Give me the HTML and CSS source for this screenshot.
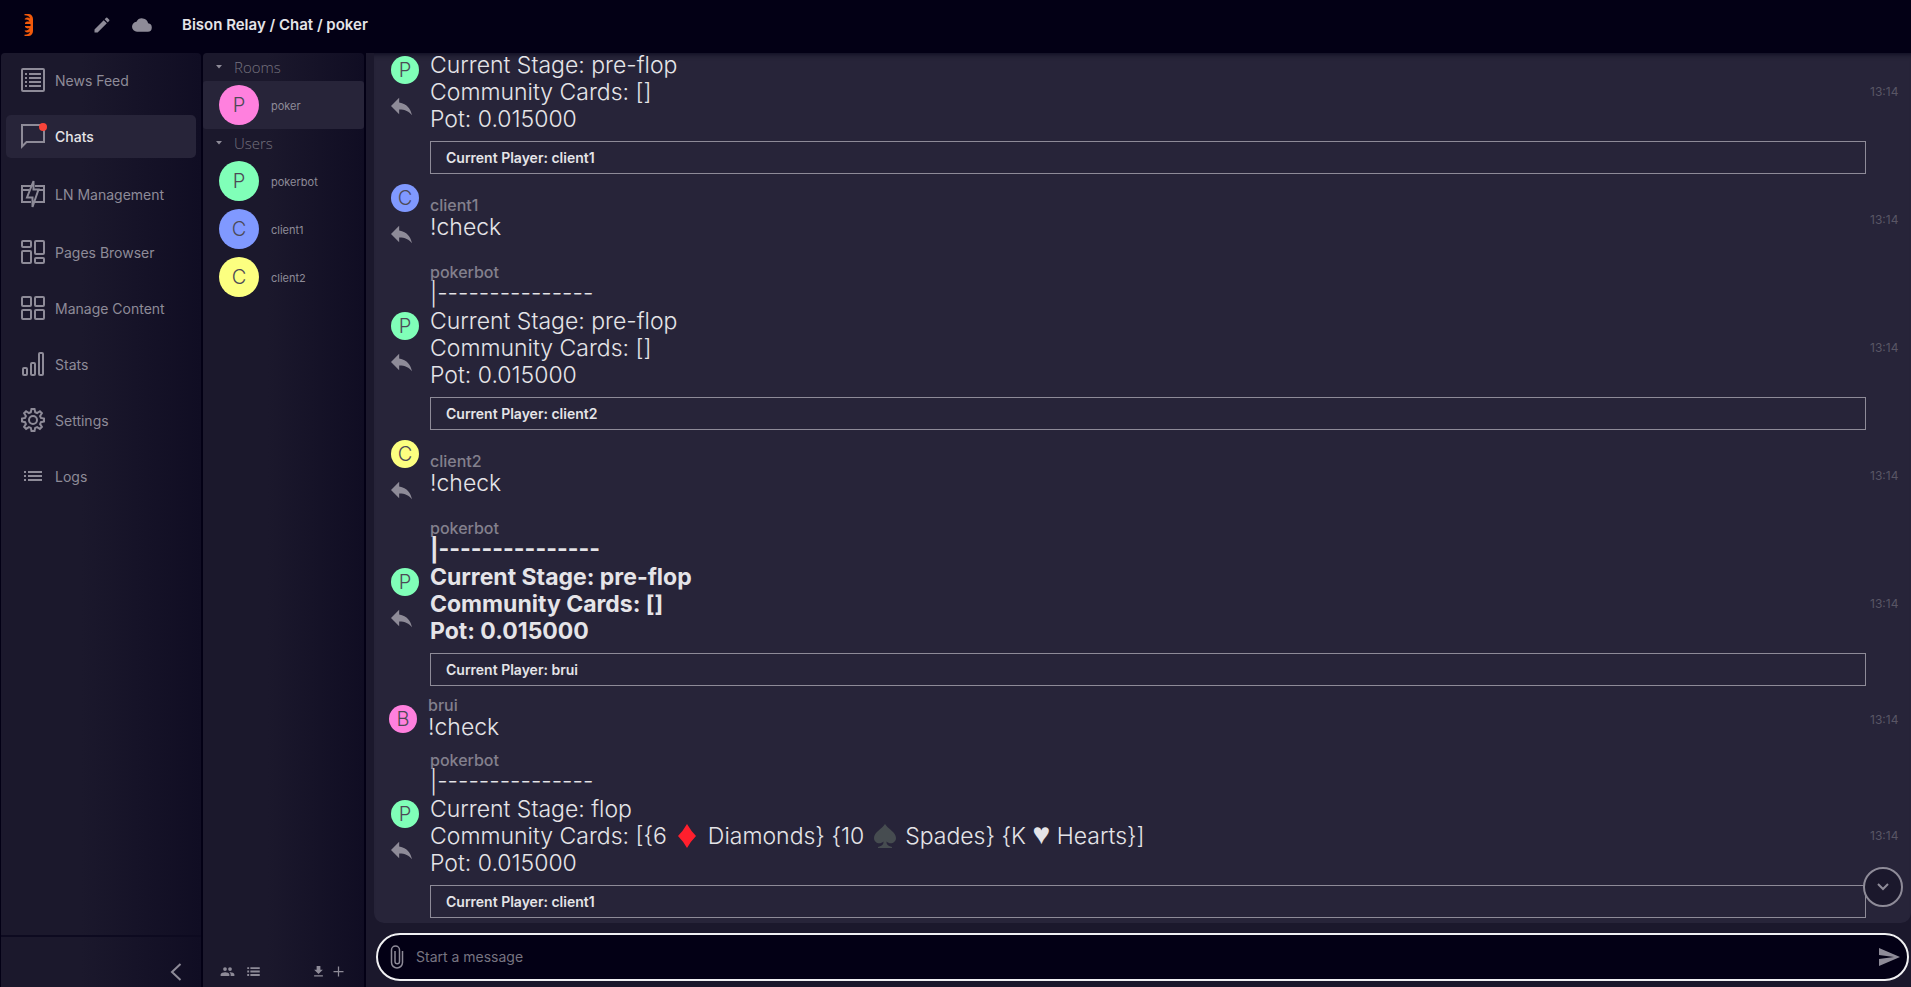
FILE: index.html
```html
<!DOCTYPE html>
<html lang="en">
<head>
<meta charset="utf-8">
<title>Bison Relay / Chat / poker</title>
<link rel="stylesheet" href="styles.css">
</head>
<body>
<svg class="defs" aria-hidden="true">
  <symbol id="reply" viewBox="3 0 24 24"><path d="M10 9V5l-7 7 7 7v-4.100c5 0 8.500 1.600 11 5.100-1-5-4-10-11-11z"/></symbol>
</svg>
<header class="topbar">
  <svg class="logo" viewBox="0 0 10 24" aria-label="Bison Relay"><path d="M.5 1H5c2.500.3 4 2.500 4 5v12c0 2.500-1.500 4.700-4 5H.5v-1.300c3 0 5-1 5.500-3.200C4.500 20 2.500 20 .8 18.200v-1c2 .6 4-.2 4.700-2.200-1.500.8-3.500.3-4.500-1v-1h5.500v-2H1v-1c1-1.300 3-1.800 4.500-1-.7-2-2.700-2.800-4.700-2.200v-1C2.500 4 4.500 4 6 5.500 5.500 3.300 3.500 2.300.5 2.300z"/></svg>
  <button class="icon-btn edit" aria-label="Edit"><svg viewBox="0 0 24 24"><path d="M3 17.250V21h3.750L17.810 9.940l-3.750-3.750zM20.710 7.040a1 1 0 0 0 0-1.410l-2.340-2.340a1 1 0 0 0-1.410 0l-1.830 1.830 3.750 3.750z"/></svg></button>
  <button class="icon-btn" aria-label="Connection"><svg viewBox="0 0 24 24"><path d="M19.350 10.040A7.490 7.490 0 0 0 5.350 8.040 6 6 0 0 0 6 20h13a5 5 0 0 0 .35-9.960z"/></svg></button>
  <h1 class="title">Bison Relay / Chat / poker</h1>
</header>
<div class="body">
  <nav class="sidebar">
    <div class="nav">
      <a class="nav-item" href="#feed"><span class="nav-pill"><svg viewBox="0 0 24 24"><rect x="1" y="1" width="22" height="22" rx="1"/><path d="M8 6h12M8 10h12M8 14h12M8 18h12M4 6h2M4 10h2M4 14h2M4 18h2"/></svg><span>News Feed</span></span></a>
      <a class="nav-item active" href="#chats"><span class="nav-pill"><svg viewBox="0 0 24 24"><path d="M1 1h22v17H5.500L1 22.500z"/></svg><i class="dot"></i><span>Chats</span></span></a>
      <a class="nav-item tall" href="#ln"><span class="nav-pill"><svg viewBox="0 0 24 24"><path d="M10 4H1v16h9M14 4h9v16h-9M1 8h7M16 8h7"/><path d="M12.500-1v8.500h5L11.500 25v-9.500H6z"/></svg><span>LN Management</span></span></a>
      <a class="nav-item" href="#pages"><span class="nav-pill"><svg viewBox="0 0 24 24"><rect x="1" y="1" width="9" height="6" rx="1"/><rect x="14" y="1" width="9" height="13" rx="1"/><rect x="1" y="11" width="9" height="12" rx="1"/><rect x="14" y="18" width="9" height="5" rx="1"/></svg><span>Pages Browser</span></span></a>
      <a class="nav-item" href="#content"><span class="nav-pill"><svg viewBox="0 0 24 24"><rect x="1" y="1" width="9" height="9" rx="1"/><rect x="14" y="1" width="9" height="9" rx="1"/><rect x="1" y="14" width="9" height="9" rx="1"/><rect x="14" y="14" width="9" height="9" rx="1"/></svg><span>Manage Content</span></span></a>
      <a class="nav-item" href="#stats"><span class="nav-pill"><svg viewBox="0 0 24 24"><rect x="2" y="16" width="4" height="7" rx="1"/><rect x="10" y="11" width="4" height="12" rx="1"/><rect x="18" y="1" width="4" height="22" rx="1"/></svg><span>Stats</span></span></a>
      <a class="nav-item" href="#settings"><span class="nav-pill"><svg viewBox="0 0 24 24"><circle cx="12" cy="12" r="4"/><path d="M10.500 1h3l.7 3.200 1.900.8 2.800-1.800 2 2-1.800 2.800.8 1.900 3.100.6v3l-3.100.7-.8 1.900 1.800 2.800-2 2-2.800-1.800-1.900.8-.7 3.100h-3l-.7-3.100-1.900-.8-2.800 1.800-2-2 1.800-2.800-.8-1.900L1 13.500v-3l3.100-.6.8-1.900-1.800-2.800 2-2 2.800 1.800 1.900-.8z"/></svg><span>Settings</span></span></a>
      <a class="nav-item" href="#logs"><span class="nav-pill"><svg viewBox="0 0 24 24"><path d="M7 8h14M7 12h14M7 16h14M3 8h2M3 12h2M3 16h2"/></svg><span>Logs</span></span></a>
    </div>
    <div class="nav-foot"><button class="icon-btn collapse" aria-label="Collapse"><svg viewBox="0 0 12 18"><path d="M10.500 1L2 9l8.500 8"/></svg></button></div>
  </nav>
  <aside class="contacts">
    <h2 class="group"><svg viewBox="0 0 8 4"><path d="M1 0h6L4 3.500z"/></svg>Rooms</h2>
    <a class="contact selected" href="#poker"><span class="avatar pink">P</span><span class="label">poker</span></a>
    <h2 class="group"><svg viewBox="0 0 8 4"><path d="M1 0h6L4 3.500z"/></svg>Users</h2>
    <a class="contact" href="#pokerbot"><span class="avatar green">P</span><span class="label">pokerbot</span></a>
    <a class="contact" href="#client1"><span class="avatar blue">C</span><span class="label">client1</span></a>
    <a class="contact" href="#client2"><span class="avatar yellow">C</span><span class="label">client2</span></a>
    <div class="tools">
      <button class="icon-btn" aria-label="Users"><svg viewBox="0 0 24 24"><path d="M16 11a3 3 0 1 0 0-6 3 3 0 0 0 0 6zm-8 0a3 3 0 1 0 0-6 3 3 0 0 0 0 6zm0 2c-2.330 0-7 1.170-7 3.500V19h14v-2.500C15 14.170 10.330 13 8 13zm8 0c-.29 0-.62.02-.97.050A4.220 4.220 0 0 1 17 16.500V19h6v-2.500c0-2.330-4.670-3.500-7-3.500z"/></svg></button>
      <button class="icon-btn" aria-label="Rooms"><svg viewBox="0 0 24 24"><path d="M2 5h3v3H2zm5 0h15v3H7zM2 10.500h3v3H2zm5 0h15v3H7zM2 16h3v3H2zm5 0h15v3H7z"/></svg></button>
      <span class="spacer"></span>
      <button class="icon-btn" aria-label="Download"><svg viewBox="0 0 24 24"><path d="M19 9h-4V3H9v6H5l7 7zM5 18v2h14v-2z"/></svg></button>
      <button class="icon-btn" aria-label="Add"><svg viewBox="0 0 24 24"><path d="M20 13h-7v7h-2v-7H4v-2h7V4h2v7h7z"/></svg></button>
    </div>
  </aside>
  <main class="chat">
    <section class="messages">
      <article class="msg continued">
        <div class="who"><span class="avatar small green">P</span><button class="icon-btn reply" aria-label="Reply"><svg><use href="#reply"/></svg></button></div>
        <div class="content"><p>Current Stage: pre-flop<br>Community Cards: []<br>Pot: 0.015000</p><div class="card">Current Player: client1</div></div>
        <time>13:14</time>
      </article>
      <article class="msg short">
        <div class="who"><span class="avatar small blue">C</span><button class="icon-btn reply" aria-label="Reply"><svg><use href="#reply"/></svg></button></div>
        <div class="content"><div class="name">client1</div><p>!check</p></div>
        <time>13:14</time>
      </article>
      <article class="msg">
        <div class="who"><span class="avatar small green">P</span><button class="icon-btn reply" aria-label="Reply"><svg><use href="#reply"/></svg></button></div>
        <div class="content"><div class="name">pokerbot</div><p>|---------------<br>Current Stage: pre-flop<br>Community Cards: []<br>Pot: 0.015000</p><div class="card">Current Player: client2</div></div>
        <time>13:14</time>
      </article>
      <article class="msg short">
        <div class="who"><span class="avatar small yellow">C</span><button class="icon-btn reply" aria-label="Reply"><svg><use href="#reply"/></svg></button></div>
        <div class="content"><div class="name">client2</div><p>!check</p></div>
        <time>13:14</time>
      </article>
      <article class="msg">
        <div class="who"><span class="avatar small green">P</span><button class="icon-btn reply" aria-label="Reply"><svg><use href="#reply"/></svg></button></div>
        <div class="content"><div class="name">pokerbot</div><p class="mention">|---------------<br>Current Stage: pre-flop<br>Community Cards: []<br>Pot: 0.015000</p><div class="card">Current Player: brui</div></div>
        <time>13:14</time>
      </article>
      <article class="msg own">
        <div class="who"><span class="avatar small pink">B</span></div>
        <div class="content"><div class="name">brui</div><p>!check</p></div>
        <time>13:14</time>
      </article>
      <article class="msg">
        <div class="who"><span class="avatar small green">P</span><button class="icon-btn reply" aria-label="Reply"><svg><use href="#reply"/></svg></button></div>
        <div class="content"><div class="name">pokerbot</div><p>|---------------<br>Current Stage: flop<br>Community Cards: [{6 <svg class="suit" viewBox="0 0 28 26" role="img" aria-label="♦"><path fill="#ff1f2d" d="M14 1q4 7 9 12-5 5-9 12-4-7-9-12 5-5 9-12z"/></svg> Diamonds} {10 <svg class="suit" viewBox="0 0 28 26" role="img" aria-label="♠"><path fill="#464c50" d="M14 1c3 5 11 8 11 14 0 5-6 7-9.500 3.500 0 3 1 4 5.500 5.500v1H7v-1c4.500-1.500 5.500-2.500 5.500-5.500C9 22 3 20 3 15 3 9 11 6 14 1z"/></svg> Spades} {K <span class="heart">♥</span> Hearts}]<br>Pot: 0.015000</p><div class="card">Current Player: client1</div></div>
        <time>13:14</time>
      </article>
    </section>
    <button class="to-bottom" aria-label="Scroll to bottom"><svg viewBox="0 0 12 8"><path d="M1 1l5 5 5-5"/></svg></button>
    <form class="composer">
      <button type="button" class="icon-btn attach" aria-label="Attach"><svg viewBox="0 0 14 24"><path d="M12.500 6v11.500a5.500 5.500 0 0 1-11 0V5a4 4 0 0 1 8 0v11.500a2.200 2.200 0 0 1-4.500 0V6"/></svg></button>
      <input type="text" placeholder="Start a message" aria-label="Message">
      <button type="button" class="icon-btn send" aria-label="Send"><svg viewBox="0 0 24 24"><path d="M2 21l21-9L2 3v7l15 2-15 2z"/></svg></button>
    </form>
  </main>
</div>
</body>
</html>
```
FILE: styles.css
```css
:root {
  --ink: #030015;
  --surface: #1b182c;
  --panel: #272439;
  --muted: #8e8b98;
  --text: #e5e4e8;
}
* { box-sizing: border-box; }
body {
  margin: 0;
  height: 100vh;
  display: flex;
  flex-direction: column;
  overflow: hidden;
  background: var(--ink);
  color: var(--muted);
  font-family: Inter, "Liberation Sans", sans-serif;
}
a { color: inherit; text-decoration: none; }
.defs { display: none; }
.icon-btn {
  display: flex;
  padding: 0;
  border: 0;
  background: none;
  color: var(--muted);
}
.icon-btn svg { width: 20px; height: 20px; fill: currentColor; }

.topbar {
  flex: none;
  display: flex;
  align-items: center;
  height: 53px;
  padding: 0 24px 4px;
}
.logo { width: 10px; height: 24px; fill: #f2590a; }
.edit { margin: 0 20px 0 58px; }
.title { margin: 0 0 0 30px; color: var(--text); font-size: 15px; font-weight: 600; line-height: 20px; }

.body { flex: 1; min-height: 0; display: flex; gap: 2px; padding-left: 1px; }
.sidebar, .contacts {
  flex: none;
  display: flex;
  flex-direction: column;
  background: linear-gradient(90deg, var(--surface) 40%, #100d23);
  border-radius: 4px 4px 0 0;
}
.sidebar { width: 200px; }
.nav { flex: 1; font-size: 14px; line-height: 20px; padding: 0 5px; margin-top: -1px; }
.nav-item { display: flex; align-items: center; height: 56px; }
.nav-item.tall { height: 60px; }
.nav-pill {
  position: relative;
  flex: 1;
  display: flex;
  align-items: center;
  gap: 10px;
  height: 43px;
  padding-left: 15px;
  border-radius: 5px;
}
.nav-pill span { padding-top: 2px; }
.nav-pill svg { width: 24px; height: 24px; overflow: visible; fill: none; stroke: currentColor; stroke-width: 2; }
.active .nav-pill { background: var(--panel); color: var(--text); font-weight: 500; }
.active svg { stroke: var(--muted); }
.dot { position: absolute; left: 33px; top: 8px; width: 8px; height: 8px; border-radius: 50%; background: #f8443a; }
.nav-foot {
  display: flex;
  justify-content: flex-end;
  height: 52px;
  padding: 26px 19px 0 0;
  border-top: 2px solid #0d0a20;
}
.collapse svg { width: 12px; height: 18px; fill: none; stroke: currentColor; stroke-width: 2; }

.contacts { width: 161px; }
.group {
  display: flex;
  align-items: center;
  gap: 11px;
  height: 28px;
  margin: 0;
  padding-left: 12px;
  color: #76737f;
  font: 300 15px/20px "Open Sans", "Noto Sans", sans-serif;
}
.group svg { width: 8px; height: 4px; fill: var(--muted); }
.contact { display: flex; align-items: center; gap: 12px; height: 48px; padding-left: 16px; font-size: 11px; border-radius: 3px; }
.label { padding-top: 2px; }
.selected { background: var(--panel); }
.avatar {
  flex: none;
  display: flex;
  align-items: center;
  justify-content: center;
  width: 40px;
  height: 40px;
  border-radius: 50%;
  color: #4c4956;
  font-size: 20px;
  font-weight: 300;
}
.avatar.small { width: 28px; height: 28px; }
.pink { background: #ff80de; }
.green { background: #80ffb8; }
.blue { background: #8099ff; }
.yellow { background: #fcff80; }
.tools { display: flex; align-items: center; gap: 11px; margin-top: auto; padding: 0 18px 8px 17px; }
.tools svg { width: 15px; height: 15px; }
.tools .icon-btn:last-child { margin-left: -6px; }
.spacer { flex: 1; }

.chat { position: relative; flex: 1; min-width: 0; display: flex; flex-direction: column; background: var(--surface); }
.messages {
  flex: 1;
  min-height: 0;
  display: flex;
  flex-direction: column;
  justify-content: flex-end;
  overflow: hidden;
  margin-left: 8px;
  padding-bottom: 1px;
  background: var(--panel);
  border-radius: 0 0 10px 10px;
  box-shadow: inset 0 6px 6px -6px var(--ink);
}
.msg { flex: none; display: flex; align-items: center; gap: 11px; padding: 4px 12px 4px 17px; }
.msg.short { padding-block: 6px; }
.msg.own { padding: 7px 12px 7px 15px; }
.msg.continued { min-height: 174px; }
.continued .content { align-self: flex-end; }
.who { flex: none; width: 28px; }
.reply { margin: 8px 0 6px; }
.reply svg { width: 28px; height: 28px; }
.content { flex: 1; min-width: 0; }
.name { font-size: 16px; font-weight: 500; line-height: 17px; color: #83808d; }
.msg p { margin: 0; color: var(--text); font-size: 23px; font-weight: 300; line-height: 27px; }
.msg .mention { font-weight: 700; }
.card {
  margin-top: 8px;
  padding: 0 15px;
  border: 1px solid var(--muted);
  color: var(--text);
  font-size: 14px;
  font-weight: 600;
  line-height: 31px;
}
.msg time { flex: none; width: 29px; margin-left: -7px; color: #595665; font-size: 12px; font-weight: 400; white-space: nowrap; }
.suit { width: 28px; height: 26px; vertical-align: middle; margin-block: -4px 0; }
.heart { font-family: "DejaVu Sans", sans-serif; font-size: 30px; line-height: 0; }
.to-bottom {
  position: absolute;
  right: 8px;
  bottom: 80px;
  display: flex;
  align-items: center;
  justify-content: center;
  width: 40px;
  height: 40px;
  border: 2px solid var(--muted);
  border-radius: 50%;
  background: var(--surface);
  color: var(--muted);
}
.to-bottom svg { flex: none; width: 12px; height: 8px; fill: none; stroke: currentColor; stroke-width: 2; }
.composer {
  flex: none;
  display: flex;
  align-items: center;
  height: 48px;
  margin: 10px 2px 6px 10px;
  padding: 0 6px 0 12px;
  border: 2px solid #f0f0f2;
  border-radius: 24px;
  background: var(--ink);
}
.attach svg { width: 14px; height: 24px; fill: none; stroke: currentColor; stroke-width: 1.5; }
.composer input {
  flex: 1;
  min-width: 0;
  margin-left: 12px;
  padding: 0;
  border: 0;
  outline: 0;
  background: none;
  color: var(--text);
  font: 400 14px/20px Inter, "Liberation Sans", sans-serif;
}
.composer input::placeholder { color: #777481; opacity: 1; }
.send svg { width: 24px; height: 24px; }
```
